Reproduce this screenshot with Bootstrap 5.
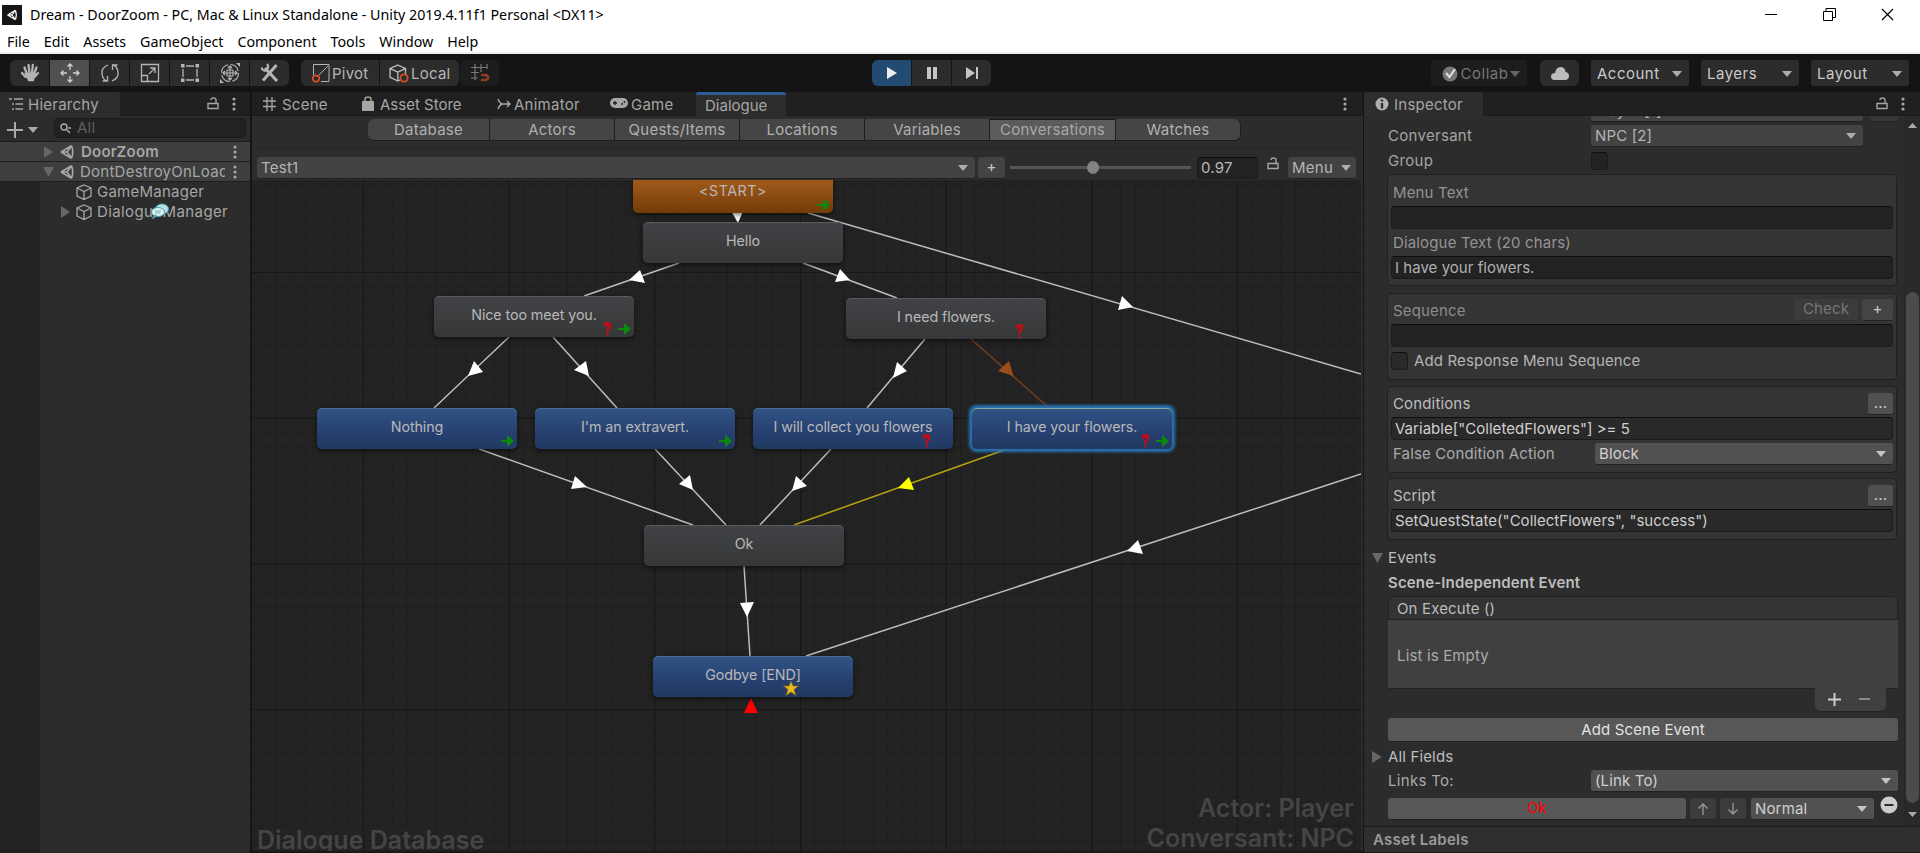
<!DOCTYPE html>
<html lang="en">
<head>
<meta charset="utf-8">
<title>Dream - DoorZoom - Unity</title>
<link href="https://cdn.jsdelivr.net/npm/bootstrap@5.3.0/dist/css/bootstrap.min.css" rel="stylesheet">
<style>
html,body{height:853px;overflow:hidden}
body{font:15px/20px Inter,"Liberation Sans",sans-serif;letter-spacing:.25px;color:#a6a6a6;background:#141414;white-space:nowrap}
svg{display:block;flex:none}
.win{background:#fff;color:#000;font-family:"Noto Sans","Open Sans",sans-serif;font-size:14.250px;letter-spacing:0;height:54px;border-bottom:2px solid #eee}
.win-title{height:29px;padding:0 26px 0 2px}
.win-ctl{gap:45px}
.win-menu{height:25px;padding:3px 0 0 7px;gap:14px}
.tools{height:38px;padding:6px 11px 0 10px}
.tb{height:26px;width:39px;background:#2c2c2c;color:#b5b5b5;margin-right:1px}
.tb.on{background:#505050}.tb.play{background:#234a70;margin-left:372px}
.tb.pivot{width:78px;margin-left:11px;padding-left:10px}
.tb.local{width:79px;padding-left:9px}
.tb.snap,.tdd.collab{background:#1d1d1d}
.tools span,.tdd{padding-top:1px}
.dd{background:#434343;border-radius:3px;color:#b4b4b4;border-bottom:1px solid #222;display:flex;align-items:center;justify-content:space-between;padding:0 7px 0 4px}
.dd::after,.tdd::after{content:"";border:5.5px solid transparent;border-top:6.5px solid #adadad;border-bottom:0;flex:none}
.tdd{height:26px;width:98px;background:#2c2c2c;color:#c9c9c9;border-radius:3px;display:flex;align-items:center;justify-content:space-between;padding:1px 7px 0 6px;letter-spacing:.5px}
.tdd.collab{width:96px;color:#777;padding-left:10px;margin-right:13px}
.tdd.collab::after{border-top-color:#666}
.strip{height:24px;background:#202020;border-bottom:1px solid #1a1a1a}
.strip span{padding-top:2px}
.ptab{height:24px;background:#2d2d2d;border-radius:3px 3px 0 0}
.ptab.blue{border-top:3px solid #2c5d94;padding-bottom:0}
.hier{width:250px;background:#2c2c2c}
.hbar{height:26px;border-bottom:1px solid #1b1b1b;padding:2px 4px 0 7px}
.hsearch{width:192px;height:20px;background:#222;border:1px solid #191919;border-radius:4px;color:#5f5f5f;padding-left:5px}
.scene{height:20px;background:#3e3e3e;border-bottom:1px solid #1f1f1f}
.hcol{width:40px;background:#222}
.obj{height:20px;position:relative}
.chat{position:absolute;left:111px;top:1px}
.mid{width:1111px;margin-left:2px;background:#2c2c2c;border-bottom:2px solid #181818}
.seg{height:22px;margin:3px 0 0 116px}
.seg div{background:#454545;color:#b0b0b0;border-right:1px solid #1e1e1e;border-bottom:1px solid #1e1e1e;text-align:center;line-height:22px}
.seg .sel{background:#5b5b5b;border-top:1px solid #181818;color:#a8a8a8;line-height:20px}
.crow{margin:6px 5px 0;padding-top:9px;border-top:1px solid #252525;height:33px}
.track{height:3px;background:#555;width:181px;position:relative;margin:9px 6px 0 5px}
.knob{position:absolute;left:77px;top:-5px;width:12px;height:13px;border-radius:50%;background:#828282}
.inp{background:#222;border:1px solid #1b1b1b;border-top-color:#0d0d0d;border-radius:4px;color:#b9b9b9;padding-left:3px;display:flex;align-items:center}
.canvas-area{position:relative;flex:1;overflow:hidden;margin-right:2px;background-color:#232323;
background-image:linear-gradient(90deg,#171717 1px,transparent 1px),linear-gradient(#171717 1px,transparent 1px),linear-gradient(90deg,#1e1e1e 1px,transparent 1px),linear-gradient(#1e1e1e 1px,transparent 1px);
background-size:145.7px 145.7px,145.7px 145.7px,14.57px 14.57px,14.57px 14.57px;background-position:111px 92px}
.links{position:absolute;left:0;top:0}
.node{position:absolute;width:200px;height:41px;border-radius:5px;text-align:center;line-height:38px;font-size:14.300px;letter-spacing:-.1px;color:#b8b8b8;box-shadow:0 2px 5px #0008,inset 0 1px #ffffff22}
.g{background:linear-gradient(#424346,#363738)}
.b{background:linear-gradient(#305585,#263f70 60%,#203a62)}
.o{background:linear-gradient(#ad6220,#733b08);letter-spacing:.5px}
.node svg{position:absolute}
.ar{right:3px;bottom:2px}.qu{right:22px;bottom:1px}
#n0{left:381px;top:-8px}#n1{left:391px;top:42px}#n2{left:182px;top:116px}#n3{left:594px;top:118px}
#n4{left:65px;top:228px}#n5{left:283px;top:228px}#n6{left:501px;top:228px}#n7{left:720px;top:228px;box-shadow:0 0 3px 3px #2873b3,inset 0 1px #8aa}
#n8{left:392px;top:345px}#n9{left:401px;top:476px}
#n9 svg{left:130px;top:25px}
.ghost{position:absolute;color:#454545;font-weight:600;font-size:25px;line-height:30px;letter-spacing:0}
.ghost.l{left:5px;bottom:-4px}.ghost.r{right:7px;bottom:-2px;text-align:right}
.insp{width:556px;margin-left:1px;background:#2c2c2c}
.ibody{height:710px;overflow:hidden;color:#a4a4a4;letter-spacing:.15px}
.icont{width:540px;padding:0 6px 0 24px}
.sbar{width:16px;border-left:1px solid #272727;background:#292929}
.thumb{width:13px;height:511px;margin:0 1px;background:#4b4b4b;border-radius:7px}
.lab{width:203px;flex:none;letter-spacing:.3px}
.box{border:1px solid #202020;border-radius:4px;background:#343434;padding:0 3px;margin:0 1px 0 -1px}
.fld{height:23px;letter-spacing:.03px}
.chk{width:17px;height:18px;flex:none;padding:0}
.mb{background:#505050;border-radius:3px;border-bottom:1px solid #222;color:#c8c8c8;text-align:center;height:22px;line-height:20px}
.lower{color:#bdbdbd}
.lower .dd{background:#515151;color:#d0d0d0}.lower .dd::after{border-top-color:#c4c4c4}
.lower .inp{background:#292929;color:#cfcfcf}
.fold{width:16px;margin-left:-16px}
</style>
</head>
<body class="d-flex flex-column">
<svg width="0" height="0" class="position-absolute"><defs>
<g id="unity" fill="none" stroke="currentColor" stroke-width="1.7"><path d="M2 8 12.5 1.8M2 8l10.500 6.200M12.500 1.800q2.500 6.200 0 12.400M8 8H2M8 8l4.500-6.200M8 8l4.500 6.200"/></g>
<g id="cube" fill="none" stroke="currentColor" stroke-width="1.300"><path d="M8 1l7 3v8l-7 3.500L1 12V4zM1 4l7 3.500L15 4M8 7.500v8"/></g>
<g id="dots" fill="currentColor"><circle cx="2" cy="2" r="1.600"/><circle cx="2" cy="7" r="1.600"/><circle cx="2" cy="12" r="1.600"/></g>
<g id="lock" fill="none" stroke="currentColor" stroke-width="1.400"><path d="M1 6.500h10v5H1zM9 6V3q0-2-2.500-2T4 3"/></g>
<g id="arr"><path d="M0 5h6V0l7 6-7 6V7H0z" fill="#0a8a0a"/></g>
<g id="ques"><path d="M1 5Q0 0 4.500 0T8 4Q8 7 5.500 8V11H3.500V6.500Q5.500 5.500 5.500 4T4 3.500V5zM3.500 12h2v2h-2z" fill="#c40c14"/></g>
</defs></svg>

<header class="win">
  <div class="win-title d-flex align-items-center">
    <svg width="20" height="20"><rect width="20" height="20" fill="#151515"/><g transform="translate(4 4) scale(.75)" color="#eee"><use href="#unity"/></g></svg>
    <span class="ms-1 ps-1 me-auto">Dream - DoorZoom - PC, Mac &amp; Linux Standalone - Unity 2019.4.11f1 Personal &lt;DX11&gt;</span>
    <div class="win-ctl d-flex">
      <svg width="13" height="13" stroke="#000"><path d="M0 6.500h12"/></svg>
      <svg width="13" height="13" fill="none" stroke="#000"><path d="M.5 3.500h9v9h-9zM3 3V.5h9.500v9H10"/></svg>
      <svg width="13" height="13" stroke="#000" stroke-width="1.200"><path d="M1 1l11 11M12 1L1 12"/></svg>
    </div>
  </div>
  <nav class="win-menu d-flex"><span>File</span><span>Edit</span><span>Assets</span><span>GameObject</span><span>Component</span><span>Tools</span><span>Window</span><span>Help</span></nav>
</header>

<div class="tools d-flex">
  <div class="tb d-flex align-items-center justify-content-center rounded-start"><svg width="20" height="20" fill="none" stroke="currentColor" stroke-width="2.300" stroke-linecap="round"><path d="M7 11 4.500 4.500M9.500 10 8.500 2M12 10l.8-8M14 11l2.500-6.500M5.500 14 2 10M14.500 14l3.500-4"/><path d="M6 11h8.500l-1.500 6H9z" fill="currentColor"/></svg></div>
  <div class="tb on d-flex align-items-center justify-content-center"><svg width="20" height="20" fill="none" stroke="#d0d0d0" stroke-width="1.300"><path d="M10 1v6M10 13v6M1 10h6M13 10h6M7.500 3.500 10 1l2.500 2.500M7.500 16.500 10 19l2.500-2.500M3.500 7.500 1 10l2.500 2.500M16.500 7.500 19 10l-2.500 2.500"/></svg></div>
  <div class="tb d-flex align-items-center justify-content-center"><svg width="20" height="20" fill="none" stroke="currentColor" stroke-width="1.300"><path d="M8 2Q1 5 2 11t5 7M2.500 18H7.500V13M12 18q7-3 6-9T13 2M17.500 2h-5v5"/></svg></div>
  <div class="tb d-flex align-items-center justify-content-center"><svg width="20" height="20" fill="none" stroke="currentColor" stroke-width="1.300"><path d="M1.500 1.500h17v17h-17zM1.500 12.500h6v6M9 11l6-6M10 5h5v5"/></svg></div>
  <div class="tb d-flex align-items-center justify-content-center"><svg width="20" height="20" fill="none" stroke="currentColor" stroke-width="1.300"><path d="M6 3h8M6 17h8M3 6v8M17 6v8"/><path d="M1 1h3.500v3.500H1zM15.500 1H19v3.500h-3.500zM1 15.500h3.500V19H1zM15.500 15.500H19V19h-3.500z" fill="currentColor" stroke="none"/></svg></div>
  <div class="tb d-flex align-items-center justify-content-center"><svg width="22" height="22" fill="none" stroke="currentColor" stroke-width="1.200"><circle cx="11" cy="11" r="8.500" stroke-dasharray="11 2.400"/><path d="M11 4v14M4 11h14M9 6l2-2 2 2M9 16l2 2 2-2M6 9l-2 2 2 2M16 9l2 2-2 2M8 8v6M14 8v6M8 8h6M8 14h6"/><path d="M17 1h4v4zM1 17v4h4z" fill="currentColor" stroke="none"/></svg></div>
  <div class="tb d-flex align-items-center justify-content-center rounded-end"><svg width="20" height="20" fill="none" stroke="currentColor" stroke-width="3"><path d="M5 5l12 13M16.500 2 3 17.500"/><path d="M1.500 4.500q1 4 5 3M7 1q2 2 .5 5" stroke-width="2"/></svg></div>
  <div class="tb pivot d-flex align-items-center rounded-start"><svg width="21" height="20" fill="none" stroke="currentColor"><path d="M5 1.500h13v17h-8M2.500 12V1.500h3M6 14 17 3"/><circle cx="5" cy="15.500" r="3.200" stroke="#d2502a" stroke-width="1.800"/></svg><span>Pivot</span></div>
  <div class="tb local d-flex align-items-center rounded-end"><svg width="22" height="20"><use href="#cube" transform="translate(0 1) scale(1.100)"/><circle cx="15" cy="15" r="3.600" fill="#2c2c2c" stroke="#d2502a" stroke-width="1.800"/></svg><span>Local</span></div>
  <div class="tb snap d-flex align-items-center justify-content-center rounded"><svg width="20" height="20" fill="none" stroke="#777" stroke-width="1.200"><path d="M5 1v16M11 1v8M17 1v5M1 4.500h16M1 9.500h8M1 15h7"/><path d="M11 12h4q3 0 3 2.500T15 17h-4" stroke="#8a3e28" stroke-width="2.600"/></svg></div>

  <div class="tb play d-flex align-items-center justify-content-center rounded-start"><svg width="12" height="14"><path d="M1 1l10 6-10 6z" fill="#eee"/></svg></div>
  <div class="tb d-flex align-items-center justify-content-center"><svg width="12" height="14" fill="#c4c4c4"><path d="M1 1h4v12H1zM7 1h4v12H7z"/></svg></div>
  <div class="tb d-flex align-items-center justify-content-center rounded-end"><svg width="14" height="14" fill="#c4c4c4"><path d="M1 1l9 6-9 6zM11 1h2v12h-2z"/></svg></div>

  <div class="d-flex ms-auto">
    <div class="tdd collab"><svg width="18" height="18"><circle cx="9" cy="9" r="7.500" fill="#777"/><path d="M5 8l3.500 4L14 4" stroke="#ddd" stroke-width="2.200" fill="none"/></svg><span class="pt-0">Collab</span></div>
    <div class="tb rounded d-flex align-items-center justify-content-center me-0"><svg width="18" height="13" fill="#bcbcbc"><path d="M4 13Q0 13 0 9.500T4 6Q5 0 9.500 0T14.500 5Q18 5.500 18 9t-3.500 4z"/></svg></div>
    <div class="d-flex ms-2 ps-1" style="gap:12px"><div class="tdd">Account</div><div class="tdd">Layers</div><div class="tdd">Layout</div></div>
  </div>
</div>

<main class="d-flex flex-grow-1" style="height:761px">
  <aside class="hier d-flex flex-column">
    <div class="strip d-flex">
      <div class="ptab d-flex align-items-center" style="width:120px;padding-left:9px"><svg width="14" height="14" stroke="currentColor" stroke-width="1.400"><path d="M0 2h3M5 2h9M3 7h2M6.500 7H14M3 12h2M6.500 12H14"/></svg><span style="margin-left:5px">Hierarchy</span></div>
      <div class="d-flex ms-auto align-items-center" style="gap:13px;padding-right:14px"><svg width="12" height="13"><use href="#lock"/></svg><svg width="4" height="14"><use href="#dots"/></svg></div>
    </div>
    <div class="hbar d-flex justify-content-between">
      <div class="d-flex align-items-center" style="gap:5px"><svg width="16" height="16" stroke="#aaa" stroke-width="2"><path d="M8 0v16M0 8h16"/></svg><svg width="10" height="6"><path d="M0 0h10L5 6z" fill="#aaa"/></svg></div>
      <div class="hsearch d-flex align-items-center"><svg width="17" height="12" fill="none" stroke="#aaa" stroke-width="1.400"><circle cx="4" cy="5" r="3"/><path d="M6 7l4 4M8 6h3"/></svg><span>All</span></div>
    </div>
    <div class="scene d-flex align-items-center" style="padding:0 13px 0 44px"><svg width="15" height="12"><path d="M0 0v12l9-6z" fill="#666"/></svg><svg width="16" height="16"><use href="#unity"/></svg><b class="fw-semibold" style="margin-left:6px">DoorZoom</b><svg class="ms-auto" width="4" height="14"><use href="#dots"/></svg></div>
    <div class="scene d-flex align-items-center" style="padding:0 13px 0 43px"><svg width="16" height="10"><path d="M0 0h11L5.500 10z" fill="#666"/></svg><svg width="16" height="16"><use href="#unity"/></svg><span class="overflow-hidden" style="margin-left:5px;width:145px">DontDestroyOnLoad</span><svg class="ms-auto" width="4" height="14"><use href="#dots"/></svg></div>
    <div class="d-flex flex-grow-1"><div class="hcol"></div>
      <div>
        <div class="obj d-flex align-items-center" style="padding-left:36px"><svg width="17" height="17"><use href="#cube"/></svg><span style="margin-left:4px">GameManager</span></div>
        <div class="obj d-flex align-items-center" style="padding-left:21px"><svg width="15" height="12"><path d="M0 0v12l9-6z" fill="#666"/></svg><svg width="17" height="17"><use href="#cube"/></svg><span style="margin-left:4px;letter-spacing:.4px">DialogueManager</span>
          <svg class="chat" width="18" height="16"><ellipse cx="11" cy="6" rx="6.500" ry="5" fill="#b9dde2" stroke="#4aa3b0"/><ellipse cx="7" cy="9" rx="6.500" ry="4.500" fill="#dfeff1" stroke="#4aa3b0"/><path d="M3 12l-2 4 5-3zM4 8h6M4 10h5" fill="#4aa3b0" stroke="#4aa3b0" stroke-width=".8"/></svg></div>
      </div>
    </div>
  </aside>

  <section class="mid d-flex flex-column">
    <div class="strip d-flex">
      <div class="d-flex align-items-center" style="width:98px;padding-left:11px"><svg width="13" height="14" stroke="currentColor" stroke-width="1.300"><path d="M4 0v14M9 0v14M0 4h13M0 9.500h13"/></svg><span style="margin-left:6px">Scene</span></div>
      <div class="d-flex align-items-center" style="width:134px;padding-left:12px"><svg width="13" height="16"><path d="M0 5h12v10H0z" fill="currentColor"/><path d="M3 7V3q0-2 3-2t3 2v4" fill="none" stroke="currentColor" stroke-width="1.500"/></svg><span style="margin-left:5px;letter-spacing:0">Asset Store</span></div>
      <div class="d-flex align-items-center" style="width:116px;padding-left:13px"><svg width="14" height="12" fill="none" stroke="currentColor" stroke-width="1.500"><path d="M1 1q2 5 5 5h7M1 11q2-5 5-5M10 3l3 3-3 3"/></svg><span style="margin-left:3px">Animator</span></div>
      <div class="d-flex align-items-center" style="width:96px;padding-left:10px"><svg width="18" height="11"><rect y="0" width="18" height="10" rx="5" fill="currentColor"/><path d="M3 5h4M5 3v4" stroke="#202020" stroke-width="1.300"/><circle cx="12" cy="6" r="1" fill="#202020"/><circle cx="14.500" cy="4" r="1" fill="#202020"/></svg><span style="margin-left:3px">Game</span></div>
      <div class="ptab blue d-flex align-items-center" style="width:90px;padding-left:9px;letter-spacing:0">Dialogue</div>
      <div class="d-flex ms-auto align-items-center" style="padding-right:16px"><svg width="4" height="14"><use href="#dots"/></svg></div>
    </div>
    <div class="seg d-flex"><div class="rounded-start" style="width:122px">Database</div><div style="width:125px">Actors</div><div style="width:125px">Quests/Items</div><div style="width:125px">Locations</div><div style="width:125px">Variables</div><div class="sel" style="width:126px">Conversations</div><div class="rounded-end" style="width:125px">Watches</div></div>
    <div class="crow d-flex align-items-start">
      <div class="dd" style="width:718px;height:22px">Test1</div>
      <div class="mb" style="width:27px;margin-left:3px;background:#434343">+</div>
      <div class="track"><div class="knob"></div></div>
      <div class="inp" style="width:61px;height:22px">0.97</div>
      <svg width="12" height="13" style="margin:0 9px 0 9px"><use href="#lock"/></svg>
      <div class="dd" style="width:68px;height:22px;padding:0 5px 0 4px">Menu</div>
    </div>
    <div class="canvas-area">
      <svg class="links" width="1109" height="672" viewBox="252 180 1109 672">
        <g stroke="#bdbdbd" stroke-width="1.500"><path d="M808 213 1361 374M679 263 584 296M803 263 897 298M509 337 434 408M553 337 617 408M925 339 867 408M479 449 693 525M655 449 726 525M831 449 760 525M744 566 750 656M806 656 1361 474"/><path d="M971 339 1049 408" stroke="#74401f"/><path d="M1007 449 794 525" stroke="#b5a510"/></g>
        <g fill="#fff"><path d="M730 209h14l-6 14zM1122 296l-4 14 15-3zM640 270l5 13-16-3zM840 269l-5 13 15-2zM474 361l9 11-15 4zM586 361l-12 9 15 6zM897 362l10 9-14 7zM575 476l-4 13 16-2zM690 475l-11 9 14 6zM796 476l11 10-15 5zM740 603l14-1-7 15zM1138 540l5 14-16-3z"/><path d="M1009 361l-11 10 15.500 5z" fill="#9c4c1c"/><path d="M909 477l5 13-16-2z" fill="#ff0"/><path d="M751 698l7 15h-14z" fill="red"/></g>
      </svg>
      <div class="node o" id="n0">&lt;START&gt;<svg class="ar" width="13" height="12"><use href="#arr"/></svg></div>
      <div class="node g" id="n1">Hello</div>
      <div class="node g" id="n2">Nice too meet you.<svg class="qu" width="9" height="14"><use href="#ques"/></svg><svg class="ar" width="13" height="12"><use href="#arr"/></svg></div>
      <div class="node g" id="n3">I need flowers.<svg class="qu" width="9" height="14"><use href="#ques"/></svg></div>
      <div class="node b" id="n4">Nothing<svg class="ar" width="13" height="12"><use href="#arr"/></svg></div>
      <div class="node b" id="n5">I'm an extravert.<svg class="ar" width="13" height="12"><use href="#arr"/></svg></div>
      <div class="node b" id="n6">I will collect you flowers<svg class="qu" width="9" height="14"><use href="#ques"/></svg></div>
      <div class="node b" id="n7">I have your flowers.<svg class="qu" width="9" height="14"><use href="#ques"/></svg><svg class="ar" width="13" height="12"><use href="#arr"/></svg></div>
      <div class="node g" id="n8">Ok</div>
      <div class="node b" id="n9">Godbye [END]<svg width="16" height="15"><path d="M8 0l2 5h5.500L11 8.500 13 14.500 8 11l-5 3.500 2-6L.5 5H6z" fill="#e8b81c" stroke="#8a6a10" stroke-width=".7"/></svg></div>
      <div class="ghost l">Dialogue Database</div>
      <div class="ghost r">Actor: Player<br>Conversant: NPC</div>
    </div>
  </section>

  <aside class="insp">
    <div class="strip d-flex">
      <div class="ptab d-flex align-items-center" style="width:119px;padding-left:11px"><svg width="14" height="14"><circle cx="7" cy="7" r="6.500" fill="#b0b0b0"/><path d="M7 2.500v2M7 6v5.500" stroke="#2d2d2d" stroke-width="2.400"/></svg><span style="margin-left:5px">Inspector</span></div>
      <div class="d-flex ms-auto align-items-center" style="gap:13px;padding-right:15px"><svg width="12" height="13"><use href="#lock"/></svg><svg width="4" height="14"><use href="#dots"/></svg></div>
    </div>
    <div class="ibody d-flex">
      <div class="icont">
        <div class="d-flex align-items-end overflow-hidden" style="height:6px;margin-bottom:3px"><div class="lab pb-1">Actor</div><div class="dd" style="width:272px;height:22px">Player [1]</div><div class="dd" style="width:27px;height:22px;margin-left:8px;padding:0 8px;background:#383838"></div></div>
        <div class="d-flex align-items-center" style="height:22px;margin-bottom:5px"><div class="lab">Conversant</div><div class="dd" style="width:272px;height:22px">NPC [2]</div></div>
        <div class="d-flex align-items-center" style="height:18px;margin-bottom:4px"><div class="lab">Group</div><div class="inp chk"></div></div>
        <div class="box" style="height:112px;padding-top:5px;margin-bottom:7px;color:#949494">
          <div style="height:26px;line-height:26px;padding-left:2px">Menu Text</div><div class="inp fld"></div>
          <div style="height:27px;line-height:27px;padding-left:2px">Dialogue Text (20 chars)</div><div class="inp fld" style="color:#b0b0b0">I have your flowers.</div>
        </div>
        <div class="box" style="height:87px;padding-top:5px;margin-bottom:6px">
          <div class="d-flex" style="height:25px"><span class="me-auto" style="line-height:24px;padding-left:2px;color:#8c8c8c">Sequence</span><div class="mb" style="width:64px;background:#3b3b3b;color:#777;border-color:#303030">Check</div><div class="mb" style="width:31px;margin-left:4px;background:#444">+</div></div>
          <div class="inp fld"></div>
          <div class="d-flex align-items-center" style="margin-top:5px;height:18px"><div class="inp chk" style="background:#2a2a2a"></div><span style="margin-left:6px;color:#b4b4b4">Add Response Menu Sequence</span></div>
        </div>
        <div class="lower">
        <div class="box" style="height:87px;padding-top:6px;margin-bottom:5px">
          <div class="d-flex justify-content-between" style="height:24px"><span style="line-height:22px;padding-left:2px">Conditions</span><div class="mb" style="width:25px">...</div></div>
          <div class="inp fld">Variable["ColletedFlowers"] &gt;= 5</div>
          <div class="d-flex align-items-center" style="margin-top:3px;height:22px"><span class="lab" style="padding-left:2px;width:204px;color:#aaa;letter-spacing:.13px">False Condition Action</span><div class="dd flex-grow-1" style="height:22px">Block</div></div>
        </div>
        <div class="box" style="height:62px;padding-top:6px;margin-bottom:5px">
          <div class="d-flex justify-content-between" style="height:24px"><span style="line-height:22px;padding-left:2px">Script</span><div class="mb" style="width:25px">...</div></div>
          <div class="inp fld">SetQuestState("CollectFlowers", "success")</div>
        </div>
        <div class="d-flex align-items-center" style="height:26px"><div class="fold"><svg width="12" height="10"><path d="M0 0h11L5.500 10z" fill="#666"/></svg></div>Events</div>
        <div class="fw-semibold" style="height:25px;line-height:24px">Scene-Independent Event</div>
        <div class="rounded-top" style="height:24px;line-height:23px;border:1px solid #222;background:#343434;padding-left:8px">On Execute ()</div>
        <div class="d-flex align-items-center" style="height:69px;background:#404040;border-bottom:1px solid #222;padding:3px 0 0 9px;color:#aaa">List is Empty</div>
        <div class="d-flex align-items-center rounded-bottom" style="width:71px;height:24px;margin:-1px 12px 0 427px;background:#404040;border-bottom:1px solid #222;padding-left:13px;gap:18px"><svg width="13" height="13" stroke="#ccc" stroke-width="2"><path d="M6.500 0v13M0 6.500h13"/></svg><svg width="11" height="3"><path d="M0 0h11v2H0z" fill="#888"/></svg></div>
        <div class="mb" style="height:24px;line-height:23px;margin-top:6px;background:#575757;color:#e2e2e2">Add Scene Event</div>
        <div class="d-flex align-items-center" style="height:26px;margin-top:2px"><div class="fold"><svg width="12" height="12"><path d="M0 0v12l10-6z" fill="#666"/></svg></div>All Fields</div>
        <div class="d-flex align-items-center" style="height:22px"><div class="lab" style="color:#aaa">Links To:</div><div class="dd flex-grow-1" style="height:22px">(Link To)</div></div>
        <div class="d-flex" style="margin-top:6px"><div class="mb" style="width:298px;background:#575757;color:#f00">Ok</div>
          <div class="mb d-flex align-items-center justify-content-center" style="width:26px;margin-left:4px;background:#3c3c3c"><svg width="12" height="12" fill="none" stroke="#999" stroke-width="1.300"><path d="M6 12V1M1.500 5.500 6 1l4.500 4.500"/></svg></div>
          <div class="mb d-flex align-items-center justify-content-center" style="width:26px;margin-left:4px;background:#3c3c3c"><svg width="12" height="12" fill="none" stroke="#999" stroke-width="1.300"><path d="M6 0v11M1.500 6.500 6 11l4.500-4.500"/></svg></div>
          <div class="dd" style="width:123px;height:22px;margin-left:5px">Normal</div>
          <svg width="18" height="18" style="margin:-2px 0 0 6px"><circle cx="9" cy="9" r="8.500" fill="#ccc"/><path d="M4.500 9h9" stroke="#2c2c2c" stroke-width="2"/></svg></div>
        </div>
      </div>
      <div class="sbar d-flex flex-column align-items-center"><svg width="9" height="5" style="margin:7px 0 164px"><path d="M0 5h9L4.500 0z" fill="#aaa"/></svg><div class="thumb"></div><svg width="9" height="5" style="margin-top:9px"><path d="M0 0h9L4.500 5z" fill="#aaa"/></svg></div>
    </div>
    <div class="fw-semibold" style="height:27px;border-top:1px solid #1b1b1b;border-bottom:1px solid #1b1b1b;background:#2f2f2f;padding-left:9px;line-height:26px;color:#999">Asset Labels</div>
  </aside>
</main>
<script src="https://cdn.jsdelivr.net/npm/bootstrap@5.3.0/dist/js/bootstrap.bundle.min.js"></script>
</body>
</html>
